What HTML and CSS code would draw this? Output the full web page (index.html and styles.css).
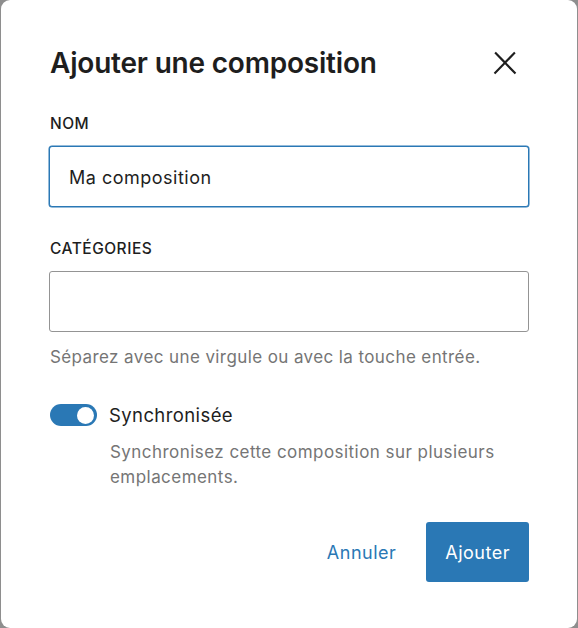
FILE: index.html
```html
<!DOCTYPE html>
<html lang="fr">
<head>
<meta charset="utf-8">
<title>Ajouter une composition</title>
<link rel="stylesheet" href="styles.css">
</head>
<body>
<div class="modal" role="dialog" aria-labelledby="modal-title">
  <div class="header">
    <h1 class="title" id="modal-title">Ajouter une composition</h1>
    <button class="close" aria-label="Fermer">
      <svg viewBox="0 0 24 24" width="36" height="36" aria-hidden="true"><path d="M13 11.8l6.1-6.3-1-1-6.1 6.2-6.1-6.2-1 1 6.1 6.3-6.5 6.7 1 1 6.5-6.6 6.5 6.6 1-1z"/></svg>
    </button>
  </div>
  <div class="field field-first">
    <label class="label" for="nom">Nom</label>
    <input class="input input-focus" id="nom" type="text" value="Ma composition">
  </div>
  <div class="field">
    <label class="label" for="cat">Catégories</label>
    <input class="input" id="cat" type="text">
    <p class="help">Séparez avec une virgule ou avec la touche entrée.</p>
  </div>
  <div class="toggle-row">
    <span class="toggle" aria-checked="true" role="switch"><span class="thumb"></span></span>
    <span class="toggle-label">Synchronisée</span>
  </div>
  <p class="desc">Synchronisez cette composition sur plusieurs emplacements.</p>
  <div class="actions">
    <button class="btn-tertiary">Annuler</button>
    <button class="btn-primary">Ajouter</button>
  </div>
</div>
</body>
</html>
```
FILE: styles.css
```css
html, body {
  margin: 0;
  padding: 0;
}
body {
  background: #8e8e8e;
  width: 578px;
  height: 628px;
  overflow: hidden;
  font-family: Inter, "Noto Sans", sans-serif;
  color: #1e1e1e;
}
.modal {
  box-sizing: border-box;
  margin-left: 1px;
  width: 576px;
  height: 628px;
  background: #fff;
  border-radius: 9px;
  padding: 43px 48px 0 48px;
  display: flex;
  flex-direction: column;
}
.header {
  display: flex;
  align-items: center;
  justify-content: space-between;
  height: 40px;
}
.title {
  margin: 0 0 0 1px;
  font-size: 28px;
  line-height: 40px;
  font-weight: 600;
  letter-spacing: -0.2px;
}
.close {
  border: 0;
  background: none;
  padding: 0;
  width: 36px;
  height: 36px;
  margin-right: 6px;
  display: flex;
  align-items: center;
  justify-content: center;
}
.close svg {
  fill: #1e1e1e;
  display: block;
}
.field {
  display: flex;
  flex-direction: column;
  margin-top: 32px;
}
.field-first {
  margin-top: 31px;
}
.label {
  margin-left: 1px;
  font-size: 15.5px;
  line-height: 20px;
  font-weight: 500;
  letter-spacing: 0.5px;
  text-transform: uppercase;
}
.input {
  box-sizing: border-box;
  margin: 12px 0 0 0;
  height: 61px;
  width: 100%;
  border: 1px solid #949494;
  border-radius: 3px;
  padding: 2px 18px 0 19px;
  font-family: Inter, "Noto Sans", sans-serif;
  font-size: 18px;
  letter-spacing: 0.5px;
  color: #1e1e1e;
  outline: none;
  background: #fff;
}
.input-focus {
  border: 1.5px solid #2a78b5;
  box-shadow: 0 0 0 0.5px #2a78b5;
}
.help {
  margin: 13px 0 0 1px;
  font-size: 17px;
  line-height: 25px;
  letter-spacing: 0.4px;
  color: #757575;
}
.toggle-row {
  display: flex;
  align-items: center;
  gap: 12px;
  margin-top: 32px;
  height: 26px;
}
.toggle {
  box-sizing: border-box;
  width: 47px;
  height: 22px;
  border-radius: 11px;
  background: #2a78b5;
  margin-left: 1px;
  display: flex;
  align-items: center;
  justify-content: flex-end;
  padding-right: 3px;
}
.thumb {
  width: 17px;
  height: 17px;
  border-radius: 50%;
  background: #fff;
}
.toggle-label {
  font-size: 18.5px;
  line-height: 26px;
  letter-spacing: 0.4px;
}
.desc {
  margin: 12px 0 0 61px;
  font-size: 17px;
  line-height: 25px;
  letter-spacing: 0.45px;
  color: #757575;
}
.actions {
  display: flex;
  justify-content: flex-end;
  align-items: center;
  gap: 12px;
  margin-top: 32px;
}
.btn-tertiary,
.btn-primary {
  font-family: Inter, "Noto Sans", sans-serif;
  font-size: 18px;
  letter-spacing: 0.5px;
  height: 60px;
  border: 0;
  border-radius: 3px;
  cursor: pointer;
}
.btn-tertiary {
  background: none;
  color: #2a78b5;
  padding: 0 18px;
}
.btn-primary {
  background: #2a78b5;
  color: #fff;
  padding: 0 19px;
}
```
